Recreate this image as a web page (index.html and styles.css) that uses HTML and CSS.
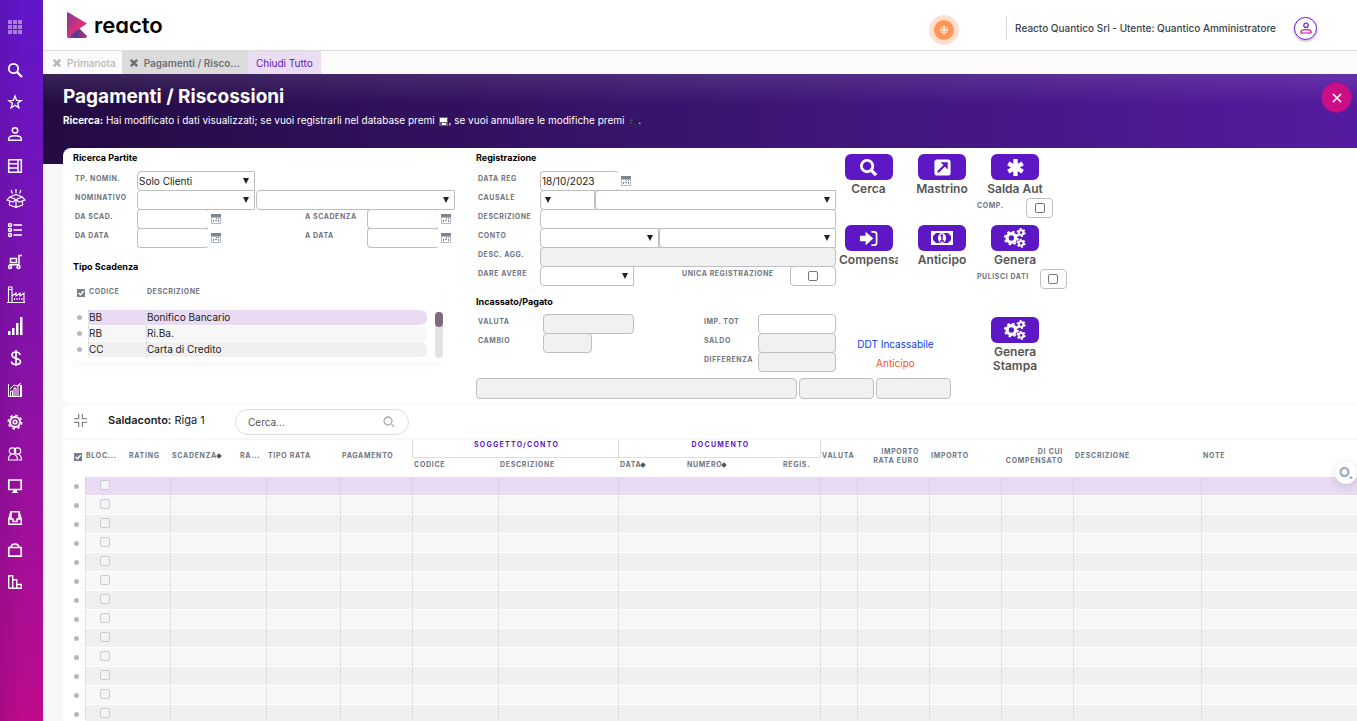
FILE: index.html
```html
<!DOCTYPE html>
<html lang="it">
<head>
  <meta charset="UTF-8">
  <meta name="viewport" content="width=device-width, initial-scale=1.0">
  <title>Pagamenti / Riscossioni</title>
  <link rel="stylesheet" href="styles.css">
</head>
<body>
<!-- shared icons -->
<svg class="defs" width="0" height="0">
  <symbol id="calendar" viewBox="0 0 10 10"><path fill="#7d858e" d="M0 0h10v3H0z"/><path fill="#b3bcc5" d="M0 3h10v7H0z"/><path fill="#fff" d="M1 4h8v5H1z"/><path fill="#7d858e" d="M5 4h1v1H5zM7 4h1v1H7zM2 6h1v2H2zM4 6h2v1H4zM7 6h1v2H7z"/></symbol>
  <symbol id="checked" viewBox="0 0 8 8"><path fill="#76808c" d="M0 0h8v8H0z"/><path fill="none" stroke="#fff" stroke-width="1.4" d="M1.5 4l2 1.8L6.7 2"/></symbol>
  <symbol id="cross" viewBox="0 0 8 8"><path fill="none" stroke="currentColor" stroke-width="2.6" d="M.8.8l6.4 6.4M7.2.8L.8 7.2"/></symbol>
  <symbol id="gears" viewBox="0 0 24 22">
    <circle cx="8" cy="11" r="4.7" fill="none" stroke="#fff" stroke-width="3.6"/>
    <circle cx="8" cy="11" r="7" fill="none" stroke="#fff" stroke-width="2.2" stroke-dasharray="2.75 2.75"/>
    <circle cx="18.7" cy="5" r="2.6" fill="none" stroke="#fff" stroke-width="2.2"/>
    <circle cx="18.7" cy="5" r="4.1" fill="none" stroke="#fff" stroke-width="1.8" stroke-dasharray="2.15 2.15"/>
    <circle cx="18.7" cy="16.8" r="2.6" fill="none" stroke="#fff" stroke-width="2.2"/>
    <circle cx="18.7" cy="16.8" r="4.1" fill="none" stroke="#fff" stroke-width="1.8" stroke-dasharray="2.15 2.15"/>
  </symbol>
</svg>
<div class="page">
  <nav class="sidebar" aria-label="Menu">
    <a class="apps" href="#" aria-label="Applicazioni"><svg viewBox="0 0 16 16"><path fill="#fff" stroke="none" d="M1 1h4v4H1zM6 1h4v4H6zM11 1h4v4h-4zM1 6h4v4H1zM6 6h4v4H6zM11 6h4v4h-4zM1 11h4v4H1zM6 11h4v4H6zM11 11h4v4h-4z"/></svg></a>
    <a href="#" aria-label="Cerca"><svg viewBox="0 0 16 16"><circle cx="6.5" cy="6.5" r="4.7" stroke-width="1.8"/><path stroke-width="2.2" d="M10 10l5 5"/></svg></a>
    <a href="#" aria-label="Preferiti"><svg viewBox="0 0 16 16"><path stroke-width="1.3" d="M8 2l1.6 4.3 4.6.2-3.6 2.8 1.3 4.5L8 11.2l-3.9 2.6 1.3-4.5-3.6-2.8 4.6-.2z"/></svg></a>
    <a href="#" aria-label="Anagrafiche"><svg viewBox="0 0 16 16"><circle cx="8" cy="4.4" r="2.7"/><path d="M1.7 14.3v-1.8C2 10.500 5 9.800 8 9.800s6 .7 6.300 2.700v1.800z"/></svg></a>
    <a href="#" aria-label="Moduli"><svg viewBox="0 0 16 16"><path d="M1.700 1.700h12.600v12.600H1.700zM11 2v12M2 5.700h9M2 10h9"/></svg></a>
    <a class="wide" href="#" aria-label="Prodotti"><svg viewBox="0 0 20 20"><path stroke-width="1.200" d="M10 1v4M5 2l1.500 3.500M15 2l-1.500 3.500M4 9l6-2.500L16 9l-6 2.500zM4 9l-3 3 6 2 3-2.500 3 2.500 6-2-3-3M3.500 13v4l6.500 2.300 6.500-2.300v-4M10 12v7"/></svg></a>
    <a href="#" aria-label="Elenchi"><svg viewBox="0 0 16 16"><circle cx="3" cy="3" r="1.500"/><circle cx="3" cy="8" r="1.500"/><circle cx="3" cy="13" r="1.500"/><path d="M6.500 3H15M6.500 8H15M6.500 13H15"/></svg></a>
    <a href="#" aria-label="Logistica"><svg viewBox="0 0 16 16"><circle cx="3" cy="13" r="1.500"/><circle cx="11.500" cy="13" r="1.500"/><path d="M3.500 4.500h6v4h-6zM2 10.800h10M12 11V1.500h3"/></svg></a>
    <a class="wide" href="#" aria-label="Produzione"><svg viewBox="0 0 20 20"><path stroke-width="1.100" d="M1 18.500h18M2.500 18V3h3.500v15M2 5.500h4M6 12l4-3v3l4-3v3l4-3v9M8.500 14v2M11 14v2M13.500 14v2M16 14v2"/></svg></a>
    <a class="wide" href="#" aria-label="Vendite"><svg viewBox="0 0 20 20"><path fill="#fff" stroke="none" d="M2 15h2.500v4H2zM6 12h2.500v7H6zM10 7h2.500v12H10zM14 1h2.500v18H14z"/></svg></a>
    <a class="wide" href="#" aria-label="Contabilità"><svg viewBox="0 0 20 20"><path stroke-width="1.700" d="M14 7c-.5-4-8-4-8 0 0 4 8.500 3 8.500 6.500 0 4-9 4-9 0M10 2v16"/></svg></a>
    <a href="#" aria-label="Statistiche"><svg viewBox="0 0 16 16"><path stroke-width="1" d="M1.500 2v12.500H15M3.500 14V9h2v5M7 14V6h2v8M11 14V3h2.500v11M3 7l4-4 3 1 4-3M14.500 3v11"/></svg></a>
    <a href="#" aria-label="Impostazioni"><svg viewBox="0 0 16 16"><circle cx="8" cy="8" r="5" stroke-width="2"/><circle cx="8" cy="8" r="6.700" stroke-width="1.600" stroke-dasharray="2.630"/><circle cx="8" cy="8" r="1.800" stroke-width="1.600"/></svg></a>
    <a href="#" aria-label="Utenti"><svg viewBox="0 0 16 16"><circle cx="5.500" cy="5" r="3.200" stroke-width="1.200"/><circle cx="10.500" cy="5" r="3.200" stroke-width="1.200"/><path stroke-width="1.200" d="M4 8.500C2 9.500 1.500 11 1.500 14h9c0-3-.5-4.500-3-5.500M12 8.500c2 1 2.500 2.500 2.500 5.500h-3"/></svg></a>
    <a href="#" aria-label="Postazione"><svg viewBox="0 0 16 16"><path stroke-width="1.700" d="M1.800 2h12.400v9.500H1.800z"/><path fill="#fff" stroke="none" d="M6 12h4v2h1v1H5v-1h1z"/></svg></a>
    <a href="#" aria-label="Archivio"><svg viewBox="0 0 16 16"><path d="M4 1.800h8l2.200 7.200v5.200H1.800V9zM2 9h4v2.500h4V9h4M4 2v7M12 2v7"/></svg></a>
    <a href="#" aria-label="Acquisti"><svg viewBox="0 0 16 16"><path stroke-width="1.700" d="M1.800 5.500h12.400v8.700H1.800zM4 5.500C4.500.8 11.500.8 12 5.500"/></svg></a>
    <a href="#" aria-label="Report"><svg viewBox="0 0 16 16"><path stroke-width="1.400" d="M1.700 14.300V1.700h4v12.600M5.700 5.700h4v8.600M9.700 10.500h4.600v3.800H1.700"/></svg></a>
  </nav>
  <main class="main">
    <header class="topbar">
      <a class="logo" href="#">
        <svg viewBox="0 0 20 26">
          <defs>
            <linearGradient id="l1" x1="0" y1="0" x2="1" y2="1"><stop offset="0" stop-color="#7b3b96"/><stop offset=".6" stop-color="#e0307b"/><stop offset="1" stop-color="#e6267b"/></linearGradient>
            <linearGradient id="l2" x1="0" y1="0" x2="1" y2="0"><stop offset="0" stop-color="#e0307b"/><stop offset=".4" stop-color="#493b92"/><stop offset="1" stop-color="#c1307f"/></linearGradient>
          </defs>
          <path fill="url(#l2)" d="M0 25L12 16l8 8q0 2-2 2H1z"/>
          <path fill="url(#l1)" d="M0 1q0-1 1.500-.5L20 11.500 0 25z"/>
        </svg>
        <span>reacto</span>
      </a>
      <button class="target" aria-label="Localizza"><svg viewBox="0 0 12 12"><circle cx="6" cy="6" r="3.800"/><circle cx="6" cy="6" r="1.500" fill="#fff"/><path d="M6 .5v2M6 9.500v2M.5 6h2M9.500 6h2"/></svg></button>
      <div class="user">Reacto Quantico Srl - Utente: Quantico Amministratore</div>
      <button class="avatar" aria-label="Profilo"><svg viewBox="0 0 12 12"><circle cx="6" cy="3.200" r="2.200" stroke="#6a1ac4"/><path stroke="#c20f8d" d="M1 11V9.500C1.500 8 4 7.700 6 7.700s4.500.3 5 1.800V11z"/></svg></button>
    </header>
    <div class="tabs">
      <button class="tab"><svg><use href="#cross"/></svg>Primanota</button>
      <button class="tab active"><svg><use href="#cross"/></svg>Pagamenti / Risco...</button>
      <button class="tab close-all">Chiudi Tutto</button>
    </div>
    <section class="hero">
      <div>
        <h1>Pagamenti / Riscossioni</h1>
        <p><b>Ricerca:</b> Hai modificato i dati visualizzati; se vuoi registrarli nel database premi <svg class="save" viewBox="0 0 9 9"><path fill="#666" d="M0 0h9v9H0z"/><path fill="#fff" d="M1 1h7v4H1zM3 6h4v2H3z"/></svg>, se vuoi annullare le modifiche premi <svg class="undo" viewBox="0 0 10 8"><path fill="none" stroke="#20242b" stroke-width="2" d="M1 4h8v3"/><path fill="#8a8f8a" d="M1 2h3v1H1zM1 5h2v1H1z"/></svg>.</p>
      </div>
      <button class="close" aria-label="Chiudi"><svg viewBox="0 0 10 10"><path d="M1 1l8 8M9 1L1 9"/></svg></button>
    </section>
    <div class="content">
      <form class="panel">
        <section class="search">
          <h2>Ricerca Partite</h2>
          <div class="partite">
            <label for="tp">Tp. Nomin.</label>
            <select id="tp"><option>Solo Clienti</option></select>
            <label class="first" for="nom">Nominativo</label>
            <select id="nom"></select>
            <select class="long" aria-label="Ragione sociale"></select>
            <label class="first" for="dascad">Da Scad.</label>
            <div class="date"><input id="dascad" type="text"><svg><use href="#calendar"/></svg></div>
            <label class="second" for="ascad">A Scadenza</label>
            <div class="date"><input id="ascad" type="text"><svg><use href="#calendar"/></svg></div>
            <label class="first" for="dadata">Da Data</label>
            <div class="date"><input id="dadata" type="text"><svg><use href="#calendar"/></svg></div>
            <label class="second" for="adata">A Data</label>
            <div class="date"><input id="adata" type="text"><svg><use href="#calendar"/></svg></div>
          </div>
          <h2 class="tipo-title">Tipo Scadenza</h2>
          <div class="tipo">
            <table>
              <thead><tr><th class="mark"><svg><use href="#checked"/></svg></th><th class="code">Codice</th><th>Descrizione</th></tr></thead>
              <tbody>
                <tr class="selected"><td class="mark"><i></i></td><td>BB</td><td>Bonifico Bancario</td></tr>
                <tr><td class="mark"><i></i></td><td>RB</td><td>Ri.Ba.</td></tr>
                <tr><td class="mark"><i></i></td><td>CC</td><td>Carta di Credito</td></tr>
              </tbody>
            </table>
            <div class="scroll"><span></span></div>
          </div>
        </section>
        <section class="registration">
          <h2>Registrazione</h2>
          <div class="row">
            <label for="datareg">Data Reg</label>
            <div class="date reg"><input id="datareg" type="text" value="18/10/2023"><svg><use href="#calendar"/></svg></div>
          </div>
          <div class="row">
            <label for="causale">Causale</label>
            <select id="causale" class="w-causale"></select>
            <select class="fill" aria-label="Descrizione causale"></select>
          </div>
          <div class="row"><label for="desc">Descrizione</label><input id="desc" class="fill" type="text"></div>
          <div class="row">
            <label for="conto">Conto</label>
            <select id="conto" class="w-conto"></select>
            <select class="fill" aria-label="Descrizione conto"></select>
          </div>
          <div class="row"><label for="agg">Desc. Agg.</label><input id="agg" class="fill" type="text" disabled></div>
          <div class="row">
            <label for="dare">Dare Avere</label>
            <select id="dare" class="w-dare"></select>
            <label class="unica" for="unica">Unica Registrazione</label>
            <span class="check-box w-unica"><input id="unica" type="checkbox"></span>
          </div>
          <h2 class="incassato">Incassato/Pagato</h2>
          <div class="amounts">
            <label for="valuta">Valuta</label><input id="valuta" type="text" disabled>
            <label for="imp">Imp. Tot</label><input id="imp" type="text">
            <label for="cambio">Cambio</label><input id="cambio" class="short" type="text" disabled>
            <label for="saldo">Saldo</label><input id="saldo" type="text" disabled>
            <label class="third" for="diff">Differenza</label><input id="diff" type="text" disabled>
          </div>
        </section>
        <section class="actions">
          <button type="button" class="action"><span class="pill"><svg viewBox="0 0 20 20"><circle cx="8.500" cy="8.500" r="6" stroke-width="3"/><path stroke-width="3.600" d="M12.500 12.500l5.500 5.500"/></svg></span>Cerca</button>
          <button type="button" class="action middle"><span class="pill"><svg viewBox="0 0 20 20"><rect x="1.500" y="1.500" width="17" height="17" rx="3" fill="#fff" stroke="none"/><path stroke="#5e17c4" stroke-width="2.400" d="M5 15l9-9"/><path fill="#5e17c4" stroke="none" d="M8 4.500h7.500V12z"/></svg></span>Mastrino</button>
          <div class="cell">
            <button type="button" class="action"><span class="pill"><svg viewBox="0 0 20 20"><path stroke-width="4.600" d="M10 1v18M2.400 5.600l15.200 8.800M17.600 5.600L2.400 14.400"/></svg></span>Salda Aut</button>
            <div class="option"><label for="comp">Comp.</label><span class="check-box"><input id="comp" type="checkbox"></span></div>
          </div>
          <button type="button" class="action"><span class="pill"><svg viewBox="0 0 20 20"><path fill="#fff" stroke="none" d="M1 7h6V3l8 7-8 7v-4H1z"/><path stroke-width="1.800" d="M13 3h3q2.500 0 2.500 2.500v9Q18.500 17 16 17h-3"/></svg></span>Compensa</button>
          <button type="button" class="action middle"><span class="pill"><svg class="note" viewBox="0 0 22 16"><path fill="#fff" stroke="none" d="M0 1h22v14H0z"/><path fill="#5e17c4" stroke="none" d="M5 3h12l3 3v4l-3 3H5l-3-3V6z"/><ellipse cx="11" cy="8" rx="4" ry="5" fill="#fff" stroke="none"/><path stroke="#5e17c4" stroke-width="1.500" d="M9.500 6L11 5v6M9 11h4"/></svg></span>Anticipo</button>
          <div class="cell">
            <button type="button" class="action"><span class="pill"><svg class="note gears"><use href="#gears"/></svg></span>Genera</button>
            <div class="option"><label for="pulisci">Pulisci Dati</label><span class="check-box"><input id="pulisci" type="checkbox"></span></div>
          </div>
          <div class="legend"><a href="#">DDT Incassabile</a><a class="orange" href="#">Anticipo</a></div>
          <div class="cell">
            <button type="button" class="action"><span class="pill"><svg class="note gears"><use href="#gears"/></svg></span>Genera<br>Stampa</button>
          </div>
        </section>
        <div class="totals">
          <input class="wide" type="text" aria-label="Note" disabled>
          <input type="text" aria-label="Totale dare" disabled>
          <input type="text" aria-label="Totale avere" disabled>
        </div>
      </form>
      <div class="toolbar">
        <button class="collapse" aria-label="Riduci"><svg viewBox="0 0 14 14"><path d="M5 0v5H0M9 0v5h5M5 14V9H0M9 14V9h5"/></svg></button>
        <div class="count"><b>Saldaconto:</b> Riga 1</div>
        <div class="find">
          <input type="text" placeholder="Cerca..." aria-label="Cerca">
          <svg viewBox="0 0 12 12"><circle cx="5" cy="5" r="4"/><path d="M8.500 8.500L11 11"/></svg>
        </div>
      </div>
      <table class="grid">
        <colgroup>
          <col class="c-mark"><col class="c-bloc"><col class="c-rating"><col class="c-scad"><col class="c-ra"><col class="c-tipo"><col class="c-pag"><col class="c-cod"><col class="c-desc"><col class="c-data"><col class="c-num"><col class="c-regis"><col class="c-val"><col class="c-imp"><col class="c-imp"><col class="c-imp"><col class="c-descr"><col>
        </colgroup>
        <thead>
          <tr>
            <th rowspan="2" class="mark"><svg><use href="#checked"/></svg></th>
            <th rowspan="2">Bloc...</th>
            <th rowspan="2">Rating</th>
            <th rowspan="2">Scadenza<span class="sort"></span></th>
            <th rowspan="2">Ra...</th>
            <th rowspan="2">Tipo Rata</th>
            <th rowspan="2">Pagamento</th>
            <th colspan="2" class="group">Soggetto/Conto</th>
            <th colspan="3" class="group">Documento</th>
            <th rowspan="2" class="after">Valuta</th>
            <th rowspan="2" class="num">Importo<br>Rata Euro</th>
            <th rowspan="2">Importo</th>
            <th rowspan="2" class="num">Di cui<br>Compensato</th>
            <th rowspan="2">Descrizione</th>
            <th rowspan="2">Note</th>
          </tr>
          <tr class="sub">
            <th>Codice</th><th>Descrizione</th><th>Data<span class="sort"></span></th><th>Numero<span class="sort"></span></th><th>Regis.</th>
          </tr>
        </thead>
        <tbody id="rows"></tbody>
      </table>
    </div>
  </main>
</div>
<button class="helper" aria-label="Assistente"><svg viewBox="0 0 14 14"><circle cx="5.500" cy="6" r="3.900"/><circle class="dot" cx="12" cy="11.500" r="1.500"/></svg></button>
<script>
  // empty rows of the grid
  const rows = document.querySelector('#rows');
  for (let i = 1; i <= 13; i++) {
    const tr = document.createElement('tr');
    if (i === 1) tr.className = 'selected';
    tr.innerHTML = `<td class="mark"><i></i></td>
      <td class="flag"><input type="checkbox" aria-label="Blocca riga ${i}" disabled></td><td class="open"></td>
      <td></td><td class="open"></td><td></td><td></td><td></td><td></td>
      <td></td><td class="open"></td><td class="open"></td>
      <td></td><td></td><td></td><td></td><td></td><td></td>`;
    rows.appendChild(tr);
  }
</script>
</body>
</html>
```
FILE: styles.css
```css
* {
  box-sizing: border-box;
}
body {
  margin: 0;
  height: 100vh;
  overflow: hidden;
  background: #f7f7f7;
  color: #222;
  font: 10px/16px Inter, "Liberation Sans", sans-serif;
}
button, input, select {
  margin: 0;
  font: inherit;
  color: inherit;
}
button {
  padding: 0;
  border: 0;
  background: none;
}
a {
  text-decoration: none;
}
h1, h2, p {
  margin: 0;
}
svg {
  display: block;
}
.defs {
  position: absolute;
}
.page {
  display: flex;
  height: 100vh;
}

/* sidebar */
.sidebar {
  flex: 0 0 43px;
  padding-top: 11px;
  background: linear-gradient(90deg, rgba(60,0,90,.15), transparent 25px), linear-gradient(#6016ca, #8712a8 50%, #be0b8c);
}
.sidebar a {
  display: flex;
  align-items: center;
  height: 32px;
  padding-left: 7px;
}
.sidebar .apps {
  margin-bottom: 11px;
  opacity: .45;
}
.sidebar svg {
  width: 16px;
  height: 16px;
  fill: none;
  stroke: #fff;
  stroke-width: 1.5;
}
.sidebar .wide {
  padding-left: 6px;
}
.sidebar .wide svg {
  width: 20px;
  height: 20px;
}

/* top bar */
.main {
  flex: 1;
  min-width: 0;
}
.topbar {
  display: flex;
  align-items: center;
  height: 51px;
  padding: 0 40px 0 24px;
  background: #fff;
  border-bottom: 1px solid #dcdcdc;
}
.logo {
  display: flex;
  align-items: center;
  gap: 7px;
  margin-right: auto;
  color: #000;
  font-size: 22px;
  font-weight: 600;
  font-feature-settings: "cv11";
}
.logo svg {
  width: 20px;
  height: 26px;
}
.target {
  display: flex;
  align-items: center;
  justify-content: center;
  width: 30px;
  height: 30px;
  margin: 10px 47px 0 0;
  border: 5px solid #ffe0cf;
  border-radius: 50%;
  background: #ff9657;
}
.target svg {
  width: 10px;
  height: 10px;
  fill: none;
  stroke: #fff;
}
.user {
  margin-top: 6px;
  padding: 4px 18px 4px 8px;
  border-left: 1px solid #d8d8d8;
  color: #37424a;
  font-weight: 500;
}
.avatar {
  display: flex;
  align-items: center;
  justify-content: center;
  width: 23px;
  height: 23px;
  margin-top: 6px;
  border: 1px solid #5f17c8;
  border-radius: 50%;
  box-shadow: 0 1px 3px rgba(0,0,0,.3);
}
.avatar svg {
  width: 12px;
  height: 12px;
  fill: none;
  stroke-width: 1.2;
}
.tabs {
  display: flex;
  height: 23px;
  background: #fbfbfb;
}
.tab {
  display: flex;
  align-items: center;
  gap: 6px;
  padding: 0 6px 0 10px;
  color: #b8b8b8;
  font-weight: 500;
}
.tab svg {
  width: 8px;
  height: 8px;
}
.tab.active {
  padding: 0 8px;
  background: #dcdcdc;
  color: #6c7079;
  font-weight: 600;
}
.tab.close-all {
  padding: 0 8px;
  background: #e9dcf3;
  color: #5f17c8;
  font-weight: 400;
}

/* page heading */
.hero {
  display: flex;
  justify-content: space-between;
  height: 90px;
  padding: 8px 5px 0 20px;
  background: linear-gradient(rgba(255,255,255,.1), transparent 30px), linear-gradient(90deg, #230b42, #3a1570 50%, #541ba0);
  color: #fff;
}
.hero h1 {
  font-size: 19px;
  font-weight: 700;
  line-height: 30px;
}
.hero p svg {
  display: inline-block;
  vertical-align: -2px;
  width: 9px;
  height: 9px;
  margin-left: 2px;
}
.close {
  display: flex;
  align-items: center;
  justify-content: center;
  width: 31px;
  height: 31px;
  border: 1px solid #9b1497;
  border-radius: 50%;
  background: #cc0e86;
}
.close svg {
  width: 10px;
  height: 10px;
  fill: none;
  stroke: #fff;
  stroke-width: 1.6;
}
.content {
  position: relative;
  margin: -16px 0 0 20px;
}

/* form */
.panel {
  display: grid;
  grid-template-columns: 403px 363px 1fr;
  padding: 0 0 5px 10px;
  border-radius: 8px 0 0 8px;
  background: #fff;
}
.panel h2 {
  color: #000;
  font-size: 9px;
  font-weight: 700;
  line-height: 20px;
}
.panel label, th {
  color: #6f7581;
  font-size: 7px;
  font-weight: 700;
  letter-spacing: .08em;
  line-height: 16px;
  text-align: left;
  text-transform: uppercase;
  white-space: nowrap;
}
.panel label {
  padding-left: 2px;
}
.panel input[type=text], .panel select, .check-box {
  height: 20px;
  min-width: 0;
  padding: 0 1px;
  border: 1px solid #bfbfbf;
  border-radius: 4px;
  background: #fff;
}
.panel input[type=text]:disabled {
  background: #f1f1f1;
}
.panel select {
  appearance: none;
  border-radius: 4px 0 0 4px;
  background: #fff url("data:image/svg+xml,%3Csvg xmlns='http://www.w3.org/2000/svg' width='6' height='6'%3E%3Cpath fill='%23222' d='M0 0h6L3 6z'/%3E%3C/svg%3E") no-repeat right 5px center;
}
input[type=checkbox] {
  appearance: none;
  display: block;
  width: 10px;
  height: 10px;
  border: 1px solid #777;
  border-radius: 2px;
  background: #fff;
}
.search {
  grid-row: 1 / 3;
}
.search h2, .registration h2 {
  margin-bottom: 3px;
}
.partite {
  display: grid;
  grid-template-columns: 64px 119px 49px 62px 88px;
  grid-auto-rows: 19px;
}
.first {
  grid-column: 1;
}
.second {
  grid-column: 4;
}
.partite .second {
  padding-left: 0;
}
.panel #tp, .panel #nom {
  width: 118px;
}
.panel .long {
  grid-column: 3 / 6;
}
.date {
  display: flex;
  align-items: center;
  gap: 2px;
}
.date input {
  width: 72px;
}
.panel .date input {
  border-right-color: transparent;
}
.date.reg input {
  width: 79px;
}
.date svg {
  width: 10px;
  height: 10px;
}
.panel .tipo-title {
  margin: 10px 0 2px;
}
.tipo {
  display: flex;
  justify-content: space-between;
  width: 372px;
  padding: 0 2px 4px 0;
  border-radius: 6px;
  box-shadow: 0 4px 6px rgba(0,0,0,.03);
}
.tipo table {
  width: 354px;
  border-spacing: 0;
}
.tipo th {
  height: 31px;
  padding: 5px 0 0 1px;
  vertical-align: top;
}
.tipo .code {
  width: 58px;
}
.tipo th.mark {
  width: 15px;
  padding: 10px 0 0 4px;
}
th.mark svg {
  width: 8px;
  height: 8px;
}
.tipo td {
  height: 16px;
  padding: 0;
  border-bottom: 1px solid #fff;
  border-left: 1px dotted #ccc;
  background: #f7f7f7;
  background-clip: padding-box;
  line-height: 15px;
}
.tipo td:last-child {
  border-radius: 0 6px 6px 0;
}
.tipo tr:nth-child(3) td {
  background-color: #f0f0f0;
}
td.mark i {
  display: block;
  width: 5px;
  height: 5px;
  border-radius: 50%;
  background: #b8b8b8;
}
.tipo td.mark {
  padding-left: 4px;
}
.panel tr td.mark {
  border-left: 0;
  background: none;
}
.tipo .selected td {
  background-color: #e8dbf3;
}
.scroll {
  width: 8px;
  margin-top: 33px;
  border-radius: 4px;
  background: #e3e3e3;
}
.scroll span {
  display: block;
  height: 15px;
  border-radius: 4px;
  background: #7b6b7b;
}
.row {
  display: flex;
  width: 360px;
  height: 19px;
}
.row label:first-child {
  flex: 0 0 64px;
}
.row .fill {
  flex: 1;
}
.panel .w-causale {
  width: 55px;
  background-position: 4px center;
}
.w-conto {
  width: 119px;
}
.w-dare {
  width: 94px;
}
.row .unica {
  width: 110px;
  margin-left: 46px;
}
.check-box {
  display: flex;
  align-items: center;
  justify-content: center;
  width: 27px;
}
.row .w-unica {
  flex: 1;
}
.panel .incassato {
  margin: 7px 0 2px;
}
.amounts {
  display: grid;
  grid-template-columns: 67px 91px 68px 56px 78px;
  grid-auto-rows: 19px;
}
.amounts label:nth-of-type(even), .amounts .third {
  grid-column: 4;
}
.panel .amounts .short {
  width: 49px;
}

/* action buttons */
.actions {
  display: grid;
  grid-template-columns: 65px 73px 100px;
  grid-template-rows: 71px 92px auto;
  padding-top: 6px;
}
.action {
  display: block;
  width: 59px;
  height: max-content;
  overflow: hidden;
  color: #555;
  font-size: 12px;
  font-weight: 600;
  line-height: 14px;
}
.middle, .cell .action {
  width: 76px;
}
.pill {
  display: flex;
  align-items: center;
  justify-content: center;
  width: 48px;
  height: 26px;
  margin: 0 auto 2px;
  border-radius: 6px;
  background: #5e17c4;
}
.pill svg {
  width: 19px;
  height: 19px;
  fill: none;
  stroke: #fff;
}
.pill .note {
  width: 22px;
  height: 16px;
}
.pill .gears {
  height: 20px;
}
.option {
  display: flex;
  width: max-content;
  gap: 11px;
  margin-top: 2px;
}
.option label {
  min-width: 38px;
  padding-left: 0;
}
.legend {
  display: flex;
  flex-direction: column;
  grid-column: 1 / 3;
  width: 113px;
  padding-top: 18px;
  line-height: 19px;
  text-align: center;
}
.legend a {
  color: #0b3df0;
}
.legend .orange {
  color: #f5561f;
}
.totals {
  display: flex;
  grid-column: 2 / 4;
  gap: 2px;
  padding-top: 5px;
}
.panel .totals input {
  width: 75px;
  height: 21px;
}
.panel .totals .wide {
  width: 321px;
}

/* toolbar */
.toolbar {
  display: flex;
  align-items: center;
  height: 33px;
  margin: 1px 0 2px;
  padding-left: 11px;
  border-radius: 8px 0 0 0;
  background: #fff;
}
.collapse, .count {
  margin-bottom: 3px;
}
.collapse svg {
  width: 13px;
  height: 13px;
  fill: none;
  stroke: #888;
  stroke-width: 1.4;
}
.count {
  width: 127px;
  margin-left: 21px;
  font-size: 11px;
}
.count b {
  font-weight: 600;
}
.find {
  display: flex;
  align-items: center;
  width: 174px;
  height: 26px;
  padding: 0 13px 0 12px;
  border: 1px solid #ddd;
  border-radius: 13px;
}
.find input {
  flex: 1;
  min-width: 0;
  padding: 0;
  border: 0;
  outline: 0;
}
.find input::placeholder {
  color: #555;
}
.find svg {
  width: 12px;
  height: 12px;
  fill: none;
  stroke: #aaa;
  stroke-width: 1.3;
}

/* grid */
.grid {
  width: 100%;
  min-width: 1294px;
  table-layout: fixed;
  border-spacing: 0;
  background: #fff;
}
.c-mark { width: 22px; }
.c-bloc { width: 42px; }
.c-rating { width: 43px; }
.c-scad { width: 68px; }
.c-ra { width: 28px; }
.c-tipo { width: 74px; }
.c-pag { width: 72px; }
.c-cod { width: 86px; }
.c-desc { width: 120px; }
.c-data { width: 67px; }
.c-num { width: 96px; }
.c-regis { width: 39px; }
.c-val { width: 37px; }
.c-imp { width: 72px; }
.c-descr { width: 128px; }
.grid th {
  height: 18px;
  padding: 0 0 6px 2px;
  letter-spacing: .1em;
  line-height: 9px;
}
.grid th.mark {
  padding: 0 0 3px 11px;
}
.grid th:nth-child(2) {
  padding-left: 1px;
}
.grid .num {
  padding-right: 10px;
  text-align: right;
}
.grid .group {
  border-bottom: 1px solid #ddd;
  border-left: 1px solid #ddd;
  color: #5f17c8;
  letter-spacing: .18em;
  text-align: center;
  vertical-align: top;
}
.grid .after {
  border-left: 1px solid #ddd;
  padding-left: 1px;
  border-image: linear-gradient(#ddd 17px, transparent 17px) 1;
}
.grid .sub th {
  height: 19px;
  padding: 2px 0 0 2px;
  vertical-align: top;
}
.sort {
  display: inline-block;
  width: 4px;
  height: 4px;
  background: #555;
  transform: rotate(45deg);
}
.grid td {
  height: 19px;
  padding: 0;
  border-bottom: 1px solid #fff;
  border-left: 1px dotted #ccc;
  background: #f0f0f0;
}
.grid tr:nth-child(even) td {
  background: #f7f7f7;
}
.grid tr.selected td {
  background: #e8dbf3;
}
.grid tr td.open {
  border-left: 0;
}
.grid tr td.mark {
  padding-left: 11px;
  border-left: 0;
  background: #fff;
}
.flag input {
  margin: -2px 0 0 14px;
}
.grid .flag input {
  border-color: #ccc;
  background: #f5f2f7;
}

/* floating help */
.helper {
  position: fixed;
  top: 462px;
  right: 0;
  display: flex;
  align-items: center;
  justify-content: center;
  width: 22px;
  height: 22px;
  border-radius: 50%;
  background: #fff;
  box-shadow: 0 2px 8px rgba(0,0,0,.15);
}
.helper svg {
  width: 14px;
  height: 14px;
  fill: none;
  stroke: #9fb1c4;
  stroke-width: 2.5;
}
.helper .dot {
  fill: #9fb1c4;
  stroke: none;
}
```
